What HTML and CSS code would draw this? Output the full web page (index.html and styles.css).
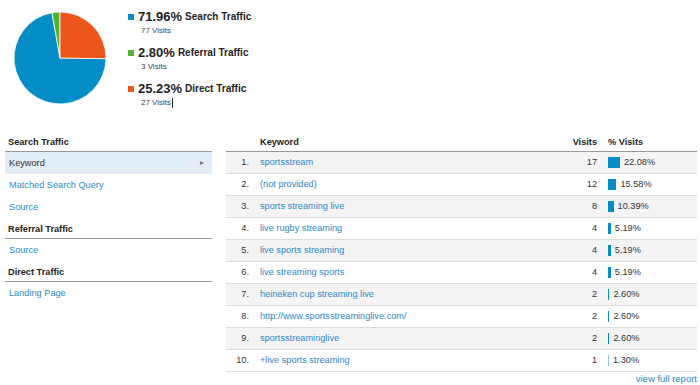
FILE: index.html
```html
<!DOCTYPE html>
<html lang="en">
<head>
    <meta charset="UTF-8">
    <title>Traffic Sources</title>
    <link rel="stylesheet" href="styles.css">
</head>
<body>
    <div class="summary">
        <svg class="pie" width="92" height="92" viewBox="0 0 92 92">
            <path d="M46,46 L92,46.67 A46,46 0 1 1 37.95,0.71 Z" fill="#058dc7" stroke="#fff" stroke-width="0.8"/>
            <path d="M46,46 L37.95,0.71 A46,46 0 0 1 46,0 Z" fill="#50b432" stroke="#fff" stroke-width="0.8"/>
            <path d="M46,46 L46,0 A46,46 0 0 1 92,46.67 Z" fill="#ed561b" stroke="#fff" stroke-width="0.8"/>
        </svg>
        <div class="legend">
            <div class="legend-item">
                <div class="legend-title"><span class="swatch blue"></span><span class="pct">71.96%</span> Search Traffic</div>
                <div class="legend-visits">77 Visits</div>
            </div>
            <div class="legend-item">
                <div class="legend-title"><span class="swatch green"></span><span class="pct">2.80%</span> Referral Traffic</div>
                <div class="legend-visits">3 Visits</div>
            </div>
            <div class="legend-item">
                <div class="legend-title"><span class="swatch orange"></span><span class="pct">25.23%</span> Direct Traffic</div>
                <div class="legend-visits">27 Visits<span class="caret"></span></div>
            </div>
        </div>
    </div>

    <div class="main">
        <div class="nav">
            <div class="nav-header">Search Traffic</div>
            <div class="nav-item active">Keyword <span class="arrow">&#9656;</span></div>
            <a class="nav-item" href="#">Matched Search Query</a>
            <a class="nav-item" href="#">Source</a>
            <div class="nav-header">Referral Traffic</div>
            <a class="nav-item" href="#">Source</a>
            <div class="nav-header">Direct Traffic</div>
            <a class="nav-item" href="#">Landing Page</a>
        </div>

        <div class="report">
            <div class="row head">
                <span></span>
                <span>Keyword</span>
                <span class="num">Visits</span>
                <span>% Visits</span>
            </div>
            <div class="row odd">
                <span class="num">1.</span><a href="#">sportsstream</a><span class="num">17</span>
                <span class="pct-cell"><i class="bar" style="width:11.9px"></i>22.08%</span>
            </div>
            <div class="row">
                <span class="num">2.</span><a href="#">(not provided)</a><span class="num">12</span>
                <span class="pct-cell"><i class="bar" style="width:8.4px"></i>15.58%</span>
            </div>
            <div class="row odd">
                <span class="num">3.</span><a href="#">sports streaming live</a><span class="num">8</span>
                <span class="pct-cell"><i class="bar" style="width:5.6px"></i>10.39%</span>
            </div>
            <div class="row">
                <span class="num">4.</span><a href="#">live rugby streaming</a><span class="num">4</span>
                <span class="pct-cell"><i class="bar" style="width:2.8px"></i>5.19%</span>
            </div>
            <div class="row odd">
                <span class="num">5.</span><a href="#">live sports streaming</a><span class="num">4</span>
                <span class="pct-cell"><i class="bar" style="width:2.8px"></i>5.19%</span>
            </div>
            <div class="row">
                <span class="num">6.</span><a href="#">live streaming sports</a><span class="num">4</span>
                <span class="pct-cell"><i class="bar" style="width:2.8px"></i>5.19%</span>
            </div>
            <div class="row odd">
                <span class="num">7.</span><a href="#">heineken cup streaming live</a><span class="num">2</span>
                <span class="pct-cell"><i class="bar" style="width:1.4px"></i>2.60%</span>
            </div>
            <div class="row">
                <span class="num">8.</span><a href="#">http://www.sportsstreaminglive.com/</a><span class="num">2</span>
                <span class="pct-cell"><i class="bar" style="width:1.4px"></i>2.60%</span>
            </div>
            <div class="row odd">
                <span class="num">9.</span><a href="#">sportsstreaminglive</a><span class="num">2</span>
                <span class="pct-cell"><i class="bar" style="width:1.4px"></i>2.60%</span>
            </div>
            <div class="row">
                <span class="num">10.</span><a href="#">+live sports streaming</a><span class="num">1</span>
                <span class="pct-cell"><i class="bar light" style="width:1px"></i>1.30%</span>
            </div>
            <div class="full-report"><a href="#">view full report</a></div>
        </div>
    </div>
</body>
</html>
```

FILE: styles.css
```css
body {
    margin: 0;
    font-family: "Liberation Sans", Arial, sans-serif;
    font-size: 9.2px;
    color: #333;
    background: #fff;
    width: 700px;
    height: 385px;
    overflow: hidden;
}

a {
    color: #2b89c7;
    text-decoration: none;
}

/* top summary: pie + legend */
.summary {
    display: flex;
    height: 131px;
}

.pie {
    margin: 12px 0 0 14px;
}

.legend {
    margin-left: 22px;
    padding-top: 9px;
}

.legend-item {
    margin-bottom: 9px;
}

.legend-title {
    font-size: 10px;
    font-weight: bold;
    line-height: 16px;
    color: #222;
    display: flex;
    align-items: center;
}

.legend-title .pct {
    font-size: 13px;
    margin-right: 3px;
}

.swatch {
    width: 6px;
    height: 6px;
    margin-right: 4px;
}

.swatch.blue { background: #058dc7; }
.swatch.green { background: #50b432; }
.swatch.orange { background: #ed561b; }

.legend-visits {
    font-size: 8px;
    line-height: 11px;
    margin-left: 13px;
    color: #444;
}

.caret {
    display: inline-block;
    width: 1px;
    height: 10px;
    background: #222;
    vertical-align: middle;
    margin-left: 1px;
}

/* lower section */
.main {
    display: flex;
    padding-left: 5px;
    gap: 14px;
}

.nav {
    width: 207px;
    display: flex;
    flex-direction: column;
}

.nav-header {
    font-weight: bold;
    color: #222;
    padding: 5px 3px 2px;
    line-height: 13px;
    border-bottom: 1px solid #999;
}

.nav-item {
    height: 22px;
    line-height: 22px;
    padding: 0 4px;
    display: flex;
    justify-content: space-between;
}

.nav-item.active {
    background: #e1ecf6;
    color: #333;
}

.nav-item .arrow {
    color: #777;
    font-size: 8px;
    margin-right: 4px;
}

.report {
    width: 471px;
}

.row {
    display: grid;
    grid-template-columns: 23px 1fr 49px 89px;
    column-gap: 11px;
    height: 21px;
    line-height: 21px;
    border-bottom: 1px solid #ddd;
    white-space: nowrap;
}

.row.head {
    height: 20px;
    line-height: 22px;
    font-weight: bold;
    color: #222;
    border-bottom: 1px solid #999;
}

.row.odd {
    background: #f4f4f4;
}

.num {
    text-align: right;
}

.pct-cell {
    display: flex;
    align-items: center;
}

.bar {
    display: inline-block;
    height: 11px;
    background: #058dc7;
    margin-right: 4px;
}

.bar.light {
    background: #8cc6e2;
}

.full-report {
    text-align: right;
    margin-top: 1px;
    font-size: 9.5px;
    line-height: 12px;
}
```
